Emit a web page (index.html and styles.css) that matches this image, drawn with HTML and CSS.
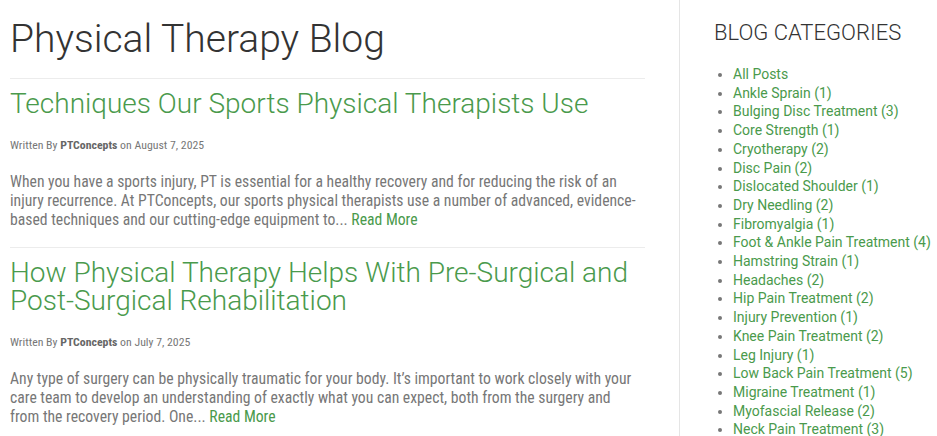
FILE: index.html
```html
<!DOCTYPE html>
<html>
<head>
<meta charset="utf-8">
<link rel="stylesheet" href="styles.css">
</head>
<body>
<div class="page">
  <main class="main">
    <h1 class="page-title">Physical Therapy Blog</h1>
    <article class="post">
      <h2 class="post-title"><a href="#">Techniques Our Sports Physical Therapists Use</a></h2>
      <p class="meta">Written By <b>PTConcepts</b> on August 7, 2025</p>
      <p class="excerpt">When you have a sports injury, PT is essential for a healthy recovery and for reducing the risk of an injury recurrence. At PTConcepts, our sports physical therapists use a number of advanced, evidence-based techniques and our cutting-edge equipment to... <a href="#">Read More</a></p>
    </article>
    <article class="post">
      <h2 class="post-title"><a href="#">How Physical Therapy Helps With Pre-Surgical and Post-Surgical Rehabilitation</a></h2>
      <p class="meta">Written By <b>PTConcepts</b> on July 7, 2025</p>
      <p class="excerpt">Any type of surgery can be physically traumatic for your body. It’s important to work closely with your care team to develop an understanding of exactly what you can expect, both from the surgery and from the recovery period. One... <a href="#">Read More</a></p>
    </article>
  </main>
  <aside class="sidebar">
    <h3 class="side-title">BLOG CATEGORIES</h3>
    <ul class="cats">
      <li><a href="#">All Posts</a></li>
      <li><a href="#">Ankle Sprain (1)</a></li>
      <li><a href="#">Bulging Disc Treatment (3)</a></li>
      <li><a href="#">Core Strength (1)</a></li>
      <li><a href="#">Cryotherapy (2)</a></li>
      <li><a href="#">Disc Pain (2)</a></li>
      <li><a href="#">Dislocated Shoulder (1)</a></li>
      <li><a href="#">Dry Needling (2)</a></li>
      <li><a href="#">Fibromyalgia (1)</a></li>
      <li><a href="#">Foot &amp; Ankle Pain Treatment (4)</a></li>
      <li><a href="#">Hamstring Strain (1)</a></li>
      <li><a href="#">Headaches (2)</a></li>
      <li><a href="#">Hip Pain Treatment (2)</a></li>
      <li><a href="#">Injury Prevention (1)</a></li>
      <li><a href="#">Knee Pain Treatment (2)</a></li>
      <li><a href="#">Leg Injury (1)</a></li>
      <li><a href="#">Low Back Pain Treatment (5)</a></li>
      <li><a href="#">Migraine Treatment (1)</a></li>
      <li><a href="#">Myofascial Release (2)</a></li>
      <li><a href="#">Neck Pain Treatment (3)</a></li>
    </ul>
  </aside>
</div>
</body>
</html>
```
FILE: styles.css
```css
html, body {
  margin: 0;
  padding: 0;
  background: #fff;
  font-family: Roboto, "Liberation Sans", sans-serif;
  height: 100%;
  overflow: hidden;
}
a { color: #4a9a4c; text-decoration: none; }
.page {
  display: flex;
  height: 436px;
}
.main {
  width: 635px;
  padding-left: 10px;
  margin-right: 34px;
}
.page-title {
  margin: 0;
  padding-top: 14px;
  font-size: 39px;
  font-weight: 300;
  color: #333;
  line-height: 50px;
  padding-bottom: 14px;
  border-bottom: 1px solid #ececec;
}
.post {
  border-bottom: 1px solid #ececec;
}
.post-title {
  margin: 0;
  padding-top: 11px;
  font-size: 28px;
  font-weight: 300;
  line-height: 28px;
}
.meta {
  margin: 20px 0 0;
  font-size: 11.8px;
  color: #777;
  font-stretch: condensed;
  line-height: 14px;
}
.meta b { color: #666; font-weight: 700; }
.excerpt {
  margin: 20px 0 0;
  padding: 0 4px 18px 0;
  font-size: 15.7px;
  line-height: 19px;
  color: #777;
  font-stretch: condensed;
}
.sidebar {
  border-left: 1px solid #e5e5e5;
  padding-left: 34px;
  flex: 1;
}
.side-title {
  margin: 0;
  padding-top: 20px;
  font-size: 22px;
  font-weight: 300;
  color: #333;
  line-height: 26px;
}
.cats {
  margin: 19px 0 0;
  padding-left: 19px;
  font-size: 14px;
  line-height: 18.7px;
  color: #777;
}
```
